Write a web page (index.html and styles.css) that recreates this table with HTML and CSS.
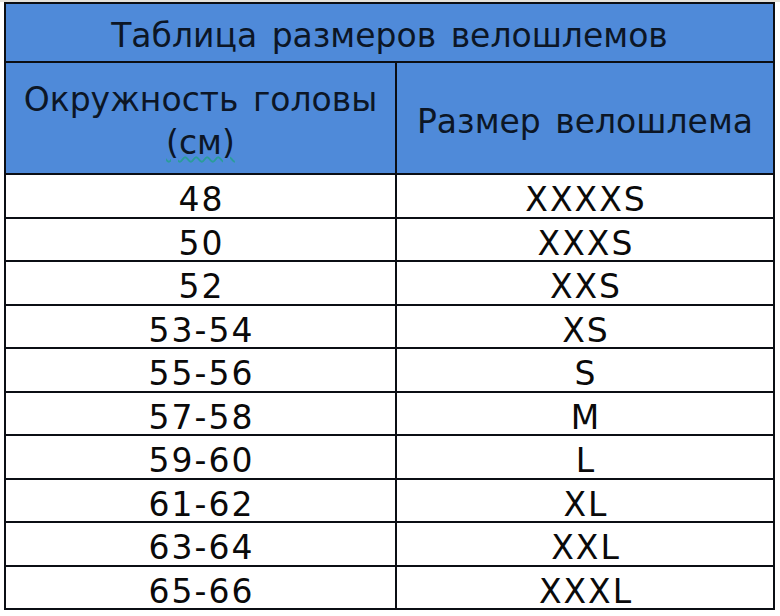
FILE: index.html
```html
<!DOCTYPE html>
<html lang="ru">
<head>
<meta charset="utf-8">
<title>Таблица размеров велошлемов</title>
<link rel="stylesheet" href="styles.css">
</head>
<body>
<div class="page">
  <div class="sheet">
    <div class="cell title"><span>Таблица размеров велошлемов</span></div>
    <div class="cell head"><span>Окружность головы<br><span class="spell">(см)</span></span></div>
    <div class="cell head"><span>Размер велошлема</span></div>
    <div class="cell data">48</div><div class="cell data">XXXXS</div>
    <div class="cell data">50</div><div class="cell data">XXXS</div>
    <div class="cell data">52</div><div class="cell data">XXS</div>
    <div class="cell data">53-54</div><div class="cell data">XS</div>
    <div class="cell data">55-56</div><div class="cell data">S</div>
    <div class="cell data">57-58</div><div class="cell data">M</div>
    <div class="cell data">59-60</div><div class="cell data">L</div>
    <div class="cell data">61-62</div><div class="cell data">XL</div>
    <div class="cell data">63-64</div><div class="cell data">XXL</div>
    <div class="cell data">65-66</div><div class="cell data">XXXL</div>
  </div>
</div>
</body>
</html>
```
FILE: styles.css
```css
html, body {
  margin: 0;
  padding: 0;
  background: #ffffff;
}

.page {
  width: 780px;
  height: 616px;
  border-top: 2px solid #e4e1da;
  box-sizing: border-box;
  padding-left: 4px;
  font-family: "DejaVu Sans", Verdana, sans-serif;
}

.sheet {
  width: 771px;
  box-sizing: border-box;
  display: grid;
  grid-template-columns: 389px 376px;
  grid-template-rows: 57px 110px repeat(10, 41.5px);
  gap: 2px;
  padding: 2px;
  background: #0b0e14;
}

.cell {
  background: #ffffff;
  color: #0a0a0a;
  font-size: 33px;
  display: flex;
  align-items: center;
  justify-content: center;
  text-align: center;
  padding-top: 8px;
  box-sizing: border-box;
  line-height: 1;
  word-spacing: 4px;
  white-space: nowrap;
}

.data {
  letter-spacing: 2px;
  padding-left: 2px;
}

.title {
  grid-column: 1 / 3;
  background: #4f8ad9;
  color: #0c1626;
  padding-top: 6px;
}

.head {
  background: #4f8ad9;
  color: #0c1626;
  line-height: 43px;
  padding-top: 6px;
}

.spell {
  text-decoration: underline wavy #2a9c9a;
  text-decoration-thickness: 2px;
  text-underline-offset: 2px;
}
```
